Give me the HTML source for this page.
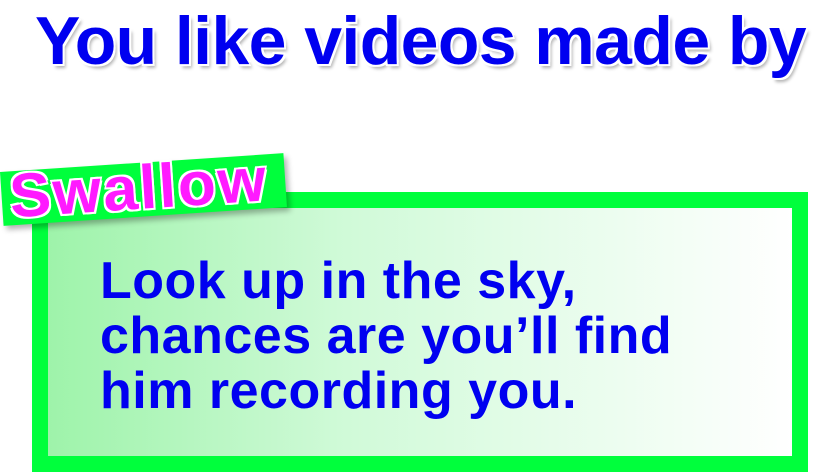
<!DOCTYPE html>
<html><head><style>
html,body{margin:0;padding:0;width:826px;height:472px;overflow:hidden;background:#fff;font-family:"Liberation Sans",sans-serif;}
.title{position:absolute;left:35px;top:2px;font-size:68px;font-weight:bold;color:#0000f0;white-space:nowrap;letter-spacing:-0.6px;
 text-shadow:0 0 2px #fff,2px 2px 0 #fff,-2px -2px 0 #fff,2px -2px 0 #fff,-2px 2px 0 #fff,3px 4px 3px rgba(0,0,0,.3);}
.box{position:absolute;left:32px;top:192px;width:744px;height:248px;border:16px solid #00ff3c;
 background:linear-gradient(90deg,#9ef3aa 0%,#d0fad8 40%,#ffffff 100%);}
.body{position:absolute;left:100px;top:254px;font-size:52px;font-weight:bold;color:#0000f0;line-height:55px;letter-spacing:0.5px;white-space:nowrap;}
.label{position:absolute;left:0px;top:172px;width:284px;height:54px;background:#00ff3c;transform:rotate(-3.8deg);transform-origin:left top;
 box-shadow:3px 4px 6px rgba(0,0,0,.3);}
.label span{position:absolute;left:8px;top:-10px;font-size:62px;font-weight:bold;color:#ff1aff;white-space:nowrap;letter-spacing:2px;
 text-shadow:0 0 2px #fff,2px 2px 0 #fff,-2px -2px 0 #fff,2px -2px 0 #fff,-2px 2px 0 #fff;}
</style></head><body>
<div class="title">You like videos made by</div>
<div class="box"></div>
<div class="body">Look up in the sky,<br>chances are you’ll find<br>him recording you.</div>
<div class="label"><span>Swallow</span></div>
</body></html>
